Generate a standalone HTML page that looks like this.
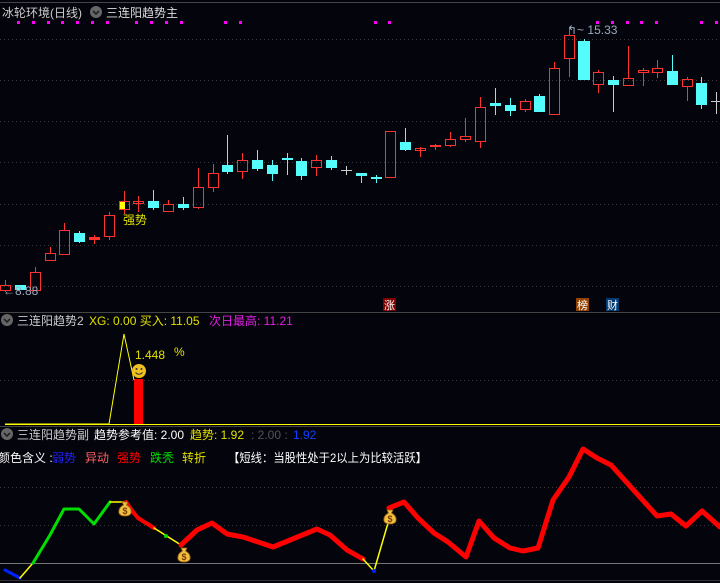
<!DOCTYPE html>
<html><head><meta charset="utf-8"><style>
body{margin:0;background:#04040c;width:720px;height:583px;overflow:hidden;font-family:"Liberation Sans","Noto Sans CJK SC",sans-serif}
svg{display:block}
text{font-family:"Liberation Sans","Noto Sans CJK SC",sans-serif;font-size:12px}
</style></head><body>
<svg width="720" height="583" viewBox="0 0 720 583" xmlns="http://www.w3.org/2000/svg">
<defs>
<g id="dn"><circle r="6" fill="#666"/><path d="M-3,-1 L0,2 L3,-1" stroke="#222" stroke-width="1.6" fill="none"/></g>
<g id="bag"><path d="M-3,-7 L3,-7 L1.5,-4 Q7,-1 6,4 Q5,7 0,7 Q-5,7 -6,4 Q-7,-1 -1.5,-4 Z" fill="#f0c040" stroke="#a06010" stroke-width="0.8"/><text x="0" y="5" text-anchor="middle" fill="#7a3a00" style="font-size:9px;font-weight:bold">$</text></g>
</defs>
<line x1="0" y1="2.5" x2="720" y2="2.5" stroke="#444" />
<g stroke="#3a3a3a" stroke-dasharray="1,3">
<line x1="0" y1="39.5" x2="720" y2="39.5"/><line x1="0" y1="80.5" x2="720" y2="80.5"/><line x1="0" y1="121.5" x2="720" y2="121.5"/><line x1="0" y1="162.5" x2="720" y2="162.5"/><line x1="0" y1="204.5" x2="720" y2="204.5"/><line x1="0" y1="245.5" x2="720" y2="245.5"/><line x1="0" y1="286.5" x2="720" y2="286.5"/>
</g>
<text x="2" y="17" fill="#ccc">冰轮环境(日线)</text>
<use href="#dn" x="96" y="12"/>
<text x="106" y="17" fill="#ddd">三连阳趋势主</text>
<g fill="#ff00ff">
<rect x="17" y="21" width="3" height="3"/><rect x="32" y="21" width="3" height="3"/><rect x="47" y="21" width="3" height="3"/><rect x="61" y="21" width="3" height="3"/><rect x="76" y="21" width="3" height="3"/><rect x="91" y="21" width="3" height="3"/><rect x="106" y="21" width="3" height="3"/><rect x="135" y="21" width="3" height="3"/><rect x="150" y="21" width="3" height="3"/><rect x="165" y="21" width="3" height="3"/><rect x="180" y="21" width="3" height="3"/><rect x="224" y="21" width="3" height="3"/><rect x="239" y="21" width="3" height="3"/><rect x="374" y="21" width="3" height="3"/><rect x="388" y="21" width="3" height="3"/><rect x="596" y="21" width="3" height="3"/><rect x="611" y="21" width="3" height="3"/><rect x="626" y="21" width="3" height="3"/><rect x="640" y="21" width="3" height="3"/><rect x="655" y="21" width="3" height="3"/><rect x="700" y="21" width="3" height="3"/><rect x="715" y="21" width="3" height="3"/>
</g>
<g stroke="#ff3232" fill="none" stroke-width="1">
<path d="M5.5,280V285M5.5,290V292"/><rect x="0.5" y="285.5" width="10" height="5"/>
<path d="M35.5,267V272"/><rect x="30.5" y="272.5" width="10" height="18"/>
<path d="M50.5,247V253"/><rect x="45.5" y="253.5" width="10" height="7"/>
<path d="M64.5,223V230"/><rect x="59.5" y="230.5" width="10" height="24"/>
<path d="M94.5,235V244"/><rect x="89.5" y="237.5" width="10" height="2" fill="#ff3232"/>
<path d="M109.5,212V215M109.5,236V240"/><rect x="104.5" y="215.5" width="10" height="21"/>
<path d="M124.5,191V201M124.5,209V214"/><rect x="119.5" y="201.5" width="10" height="8"/>
<path d="M138.5,196V212"/><rect x="133.5" y="201.5" width="10" height="2"/>
<path d="M168.5,200V204"/><rect x="163.5" y="204.5" width="10" height="7"/>
<path d="M198.5,168V187M198.5,207V209"/><rect x="193.5" y="187.5" width="10" height="20"/>
<path d="M213.5,164V173M213.5,187V192"/><rect x="208.5" y="173.5" width="10" height="14"/>
<path d="M242.5,153V160M242.5,171V179"/><rect x="237.5" y="160.5" width="10" height="11"/>
<path d="M316.5,155V160M316.5,167V176"/><rect x="311.5" y="160.5" width="10" height="7"/>
<rect x="385.5" y="131.5" width="10" height="46"/>
<path d="M420.5,147V157"/><rect x="415.5" y="148.5" width="10" height="2"/>
<path d="M435.5,144V150"/><rect x="430.5" y="145.5" width="10" height="1" fill="#ff3232"/>
<path d="M450.5,132V139M450.5,145V147"/><rect x="445.5" y="139.5" width="10" height="6"/>
<path d="M465.5,118V136M465.5,139V142"/><rect x="460.5" y="136.5" width="10" height="3"/>
<path d="M480.5,97V107M480.5,141V148"/><rect x="475.5" y="107.5" width="10" height="34"/>
<path d="M525.5,99V101M525.5,109V112"/><rect x="520.5" y="101.5" width="10" height="8"/>
<path d="M554.5,62V68"/><rect x="549.5" y="68.5" width="10" height="46"/>
<path d="M569.5,28V35M569.5,58V77"/><rect x="564.5" y="35.5" width="10" height="23"/>
<path d="M598.5,70V72M598.5,84V93"/><rect x="593.5" y="72.5" width="10" height="12"/>
<path d="M628.5,46V78M628.5,85V86"/><rect x="623.5" y="78.5" width="10" height="7"/>
<path d="M643.5,68V70M643.5,72V86"/><rect x="638.5" y="70.5" width="10" height="2"/>
<path d="M657.5,60V68M657.5,72V78"/><rect x="652.5" y="68.5" width="10" height="4"/>
<path d="M687.5,77V79M687.5,86V101"/><rect x="682.5" y="79.5" width="10" height="7"/>
</g>
<rect x="120" y="202" width="5" height="7" fill="#ffff00"/>
<g stroke="#54fcfc" fill="#54fcfc">
<rect x="15.5" y="285.5" width="10" height="4"/>
<path d="M79.5,231V243" /><rect x="74.5" y="233.5" width="10" height="8"/>
<path d="M153.5,190V210"/><rect x="148.5" y="201.5" width="10" height="6"/>
<path d="M183.5,197V210"/><rect x="178.5" y="204.5" width="10" height="3"/>
<path d="M227.5,135V174"/><rect x="222.5" y="165.5" width="10" height="6"/>
<path d="M257.5,150V171"/><rect x="252.5" y="160.5" width="10" height="8"/>
<path d="M272.5,160V181"/><rect x="267.5" y="165.5" width="10" height="8"/>
<path d="M287.5,153V175"/><rect x="282.5" y="158.5" width="10" height="1"/>
<path d="M301.5,158V180"/><rect x="296.5" y="161.5" width="10" height="14"/>
<path d="M331.5,156V170"/><rect x="326.5" y="160.5" width="10" height="7"/>
<path d="M361.5,173V183"/><rect x="356.5" y="173.5" width="10" height="2"/>
<path d="M376.5,175V183"/><rect x="371.5" y="177.5" width="10" height="1"/>
<path d="M405.5,128V151"/><rect x="400.5" y="142.5" width="10" height="7"/>
<path d="M495.5,88V115"/><rect x="490.5" y="103.5" width="10" height="2"/>
<path d="M510.5,98V116"/><rect x="505.5" y="105.5" width="10" height="5"/>
<path d="M539.5,94V112"/><rect x="534.5" y="96.5" width="10" height="15"/>
<path d="M584.5,39V80"/><rect x="578.5" y="41.5" width="11" height="38"/>
<path d="M613.5,76V112"/><rect x="608.5" y="80.5" width="10" height="4"/>
<path d="M672.5,55V84"/><rect x="667.5" y="71.5" width="10" height="13"/>
<path d="M701.5,77V109"/><rect x="696.5" y="83.5" width="10" height="21"/>
</g>
<g stroke="#ccc"><path d="M346.5,166V175M341,170.5H352"/><path d="M716.5,92V114M711,101.5H720"/></g>
<text x="123" y="224" fill="#e0e000">强势</text>
<text x="567" y="34" fill="#9ab" style="font-size:12px">↰~ 15.33</text>
<text x="3" y="295" fill="#9ab" style="font-size:12px">←8.88</text>
<rect x="383" y="298" width="13" height="13" fill="#800000"/><text x="384" y="309" fill="#fff" style="font-size:11px">涨</text>
<rect x="576" y="298" width="13" height="13" fill="#904000"/><text x="577" y="309" fill="#fff" style="font-size:11px">榜</text>
<rect x="606" y="298" width="13" height="13" fill="#003a70"/><text x="607" y="309" fill="#fff" style="font-size:11px">财</text>
<line x1="0" y1="312.5" x2="720" y2="312.5" stroke="#444"/>
<use href="#dn" x="7" y="320"/>
<text x="17" y="325" fill="#ccc">三连阳趋势2</text>
<text x="89" y="325" fill="#e0e000">XG: 0.00  买入: 11.05</text>
<text x="209" y="325" fill="#e020e0">次日最高: 11.21</text>
<line x1="0" y1="380.5" x2="720" y2="380.5" stroke="#3a3a3a" stroke-dasharray="1,3"/>
<rect x="134" y="379" width="9" height="45" fill="#ff0000"/>
<polyline points="5,424 109,424 124,334 134,380" fill="none" stroke="#ffff00" stroke-width="1"/>
<line x1="5" y1="424.5" x2="720" y2="424.5" stroke="#ffff00"/>
<circle cx="139" cy="371" r="7" fill="#f0c020"/>
<circle cx="136.5" cy="369" r="1" fill="#333"/><circle cx="141.5" cy="369" r="1" fill="#333"/>
<path d="M135.5,372.5 Q139,376 142.5,372.5" stroke="#333" fill="none"/>
<text x="135" y="359" fill="#e0e000">1.448</text>
<text x="174" y="356" fill="#e0e000">%</text>
<line x1="0" y1="426.5" x2="720" y2="426.5" stroke="#444"/>
<use href="#dn" x="7" y="434"/>
<text x="17" y="439" fill="#ccc">三连阳趋势副</text>
<text x="94" y="439" fill="#fff">趋势参考值: 2.00</text>
<text x="190" y="439" fill="#e0e000">趋势: 1.92</text>
<text x="251" y="439" fill="#555">: 2.00 :</text>
<text x="293" y="439" fill="#1040ff">1.92</text>
<text x="-2" y="462" fill="#fff">颜色含义 :</text>
<text x="52" y="462" fill="#2020ff">弱势</text>
<text x="85" y="462" fill="#ff6060">异动</text>
<text x="117" y="462" fill="#ff0000">强势</text>
<text x="150" y="462" fill="#00e000">跌秃</text>
<text x="182" y="462" fill="#e0e000">转折</text>
<text x="228" y="462" fill="#fff" textLength="199" lengthAdjust="spacingAndGlyphs">【短线：当股性处于2以上为比较活跃】</text>
<g stroke="#3a3a3a" stroke-dasharray="1,3"><line x1="0" y1="487.5" x2="720" y2="487.5"/><line x1="0" y1="525.5" x2="720" y2="525.5"/></g>
<line x1="0" y1="563.5" x2="720" y2="563.5" stroke="#777"/>
<line x1="0" y1="580.5" x2="720" y2="580.5" stroke="#333"/>
<g fill="none" stroke-linejoin="round" stroke-linecap="round">
<polyline points="5,570 20,578" stroke="#0020ff" stroke-width="3"/>
<polyline points="20,578 33,563" stroke="#ffff00" stroke-width="1.5"/>
<polyline points="33,563 50,535 64,509 79,509 94,524 110,502" stroke="#00e000" stroke-width="3"/>
<polyline points="110,502 126,502" stroke="#ffff00" stroke-width="1.5"/>
<polyline points="126,502 133,512 138,518 154,528" stroke="#ff0000" stroke-width="4"/>
<polyline points="154,528 181,545" stroke="#ffff00" stroke-width="1.5"/>
<polyline points="181,545 197,530 212,523 227,534 243,537 273,547 317,529 330,535 347,550 363,559" stroke="#ff0000" stroke-width="5"/>
<polyline points="363,559 374,571 388,523 389,508" stroke="#ffff00" stroke-width="1.5"/>
<polyline points="389,508 404,502 418,518 434,533 448,542 466,557 479,521 494,538 510,548 523,551 538,548 553,500 569,477 583,449 597,458 611,465 657,516 671,514 686,526 702,511 720,527" stroke="#ff0000" stroke-width="5"/>
</g>
<circle cx="166" cy="536" r="2" fill="#00e000"/>
<circle cx="374" cy="571" r="2" fill="#0020ff"/>
<use href="#bag" x="125" y="509"/>
<use href="#bag" x="184" y="555"/>
<use href="#bag" x="390" y="517"/>
</svg>
</body></html>
